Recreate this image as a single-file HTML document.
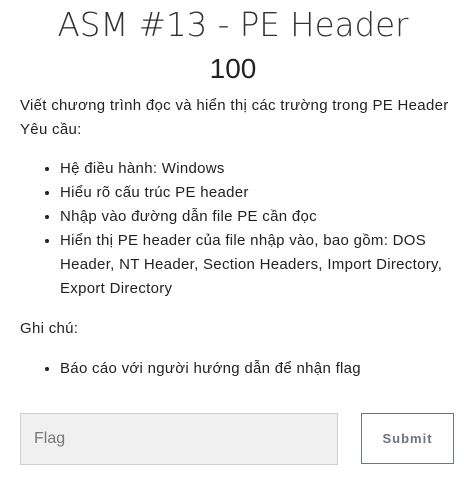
<html><head><style>
body{margin:0;width:466px;height:494px;background:#fff;font-family:"Liberation Sans",sans-serif;color:#222;position:relative;overflow:hidden}
.t{position:absolute;left:0;width:466px;text-align:center}
.p{position:absolute;left:20px;font-size:15px;line-height:24px;white-space:nowrap;letter-spacing:0.3px}
ul{position:absolute;left:20px;margin:0;padding-left:40px;font-size:15px;line-height:24px;width:395px;letter-spacing:0.3px}
</style></head><body>
<div class="t" style="top:6px;font-size:32.5px;font-weight:200;letter-spacing:0;color:#333;font-family:'DejaVu Sans','Liberation Sans',sans-serif">ASM #13 - PE Header</div>
<div class="t" style="top:53px;font-size:28px;color:#222">100</div>
<div class="p" style="top:94px">Viết chương trình đọc và hiển thị các trường trong PE Header</div>
<div class="p" style="top:118px">Yêu cầu:</div>
<ul style="top:157px"><li>Hệ điều hành: Windows</li><li>Hiểu rõ cấu trúc PE header</li><li>Nhập vào đường dẫn file PE cần đọc</li><li>Hiển thị PE header của file nhập vào, bao gồm: DOS Header, NT Header, Section Headers, Import Directory, Export Directory</li></ul>
<div class="p" style="top:317px">Ghi chú:</div>
<ul style="top:357px"><li>Báo cáo với người hướng dẫn để nhận flag</li></ul>
<div style="position:absolute;left:20px;top:413px;background:#f0f0f0;border:1px solid #ccd0d6;font-size:16px;color:#777;line-height:50px;padding-left:13px;box-sizing:border-box;width:318px;height:52px">Flag</div>
<div style="position:absolute;left:361px;top:413px;width:93px;height:51px;border:1px solid #6c757d;box-sizing:border-box;text-align:center;line-height:49px;font-size:13px;font-weight:bold;color:#6c757d;letter-spacing:1px">Submit</div>
</body></html>
